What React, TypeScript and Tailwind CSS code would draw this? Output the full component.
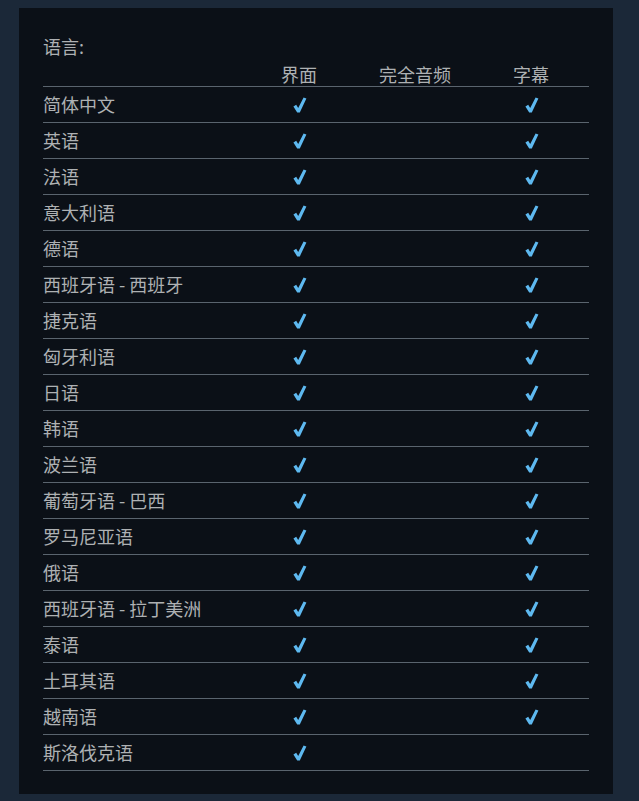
import React from 'react';

type Lang = { name: string; ui: boolean; audio: boolean; subs: boolean };

const languages: Lang[] = [
  { name: '简体中文', ui: true, audio: false, subs: true },
  { name: '英语', ui: true, audio: false, subs: true },
  { name: '法语', ui: true, audio: false, subs: true },
  { name: '意大利语', ui: true, audio: false, subs: true },
  { name: '德语', ui: true, audio: false, subs: true },
  { name: '西班牙语 - 西班牙', ui: true, audio: false, subs: true },
  { name: '捷克语', ui: true, audio: false, subs: true },
  { name: '匈牙利语', ui: true, audio: false, subs: true },
  { name: '日语', ui: true, audio: false, subs: true },
  { name: '韩语', ui: true, audio: false, subs: true },
  { name: '波兰语', ui: true, audio: false, subs: true },
  { name: '葡萄牙语 - 巴西', ui: true, audio: false, subs: true },
  { name: '罗马尼亚语', ui: true, audio: false, subs: true },
  { name: '俄语', ui: true, audio: false, subs: true },
  { name: '西班牙语 - 拉丁美洲', ui: true, audio: false, subs: true },
  { name: '泰语', ui: true, audio: false, subs: true },
  { name: '土耳其语', ui: true, audio: false, subs: true },
  { name: '越南语', ui: true, audio: false, subs: true },
  { name: '斯洛伐克语', ui: true, audio: false, subs: false },
];

function Check({ on }: { on: boolean }) {
  return (
    <div className="w-[116px] flex justify-center">
      {on && (
        <svg width="14" height="16" viewBox="0 0 14 16" className="ml-[1px]">
          <path d="M0.4 9.4 L3.2 7.8 L5.2 11.0 L10.6 0.6 L13.4 1.6 L6.8 15.4 L4.2 15.4 Z" fill="#5eb9f0" />
        </svg>
      )}
    </div>
  );
}

export default function App() {
  return (
    <div className="min-h-[801px] w-[639px] bg-[#1b2838] pt-[8px] pl-[19px] font-['Noto_Sans_CJK_SC',sans-serif]">
      <div className="w-[594px] h-[786px] bg-[#0b1017] px-[24px] pt-[26px]">
        <div className="h-[24px] leading-[24px] text-[18px] text-[#aeb1b3]">语言:</div>
        <div className="mt-[4px] flex h-[25px] items-center border-b border-[#5a646e] text-[18px] text-[#aeb1b3]">
          <div className="w-[198px]" />
          <div className="w-[116px] text-center">界面</div>
          <div className="w-[116px] text-center">完全音频</div>
          <div className="w-[116px] text-center">字幕</div>
        </div>
        {languages.map((l) => (
          <div
            key={l.name}
            className="flex h-[36px] items-center border-b border-[#5a646e] text-[18px] text-[#aeb1b3]"
          >
            <div className="w-[198px] whitespace-nowrap">{l.name}</div>
            <Check on={l.ui} />
            <Check on={l.audio} />
            <Check on={l.subs} />
          </div>
        ))}
      </div>
    </div>
  );
}
